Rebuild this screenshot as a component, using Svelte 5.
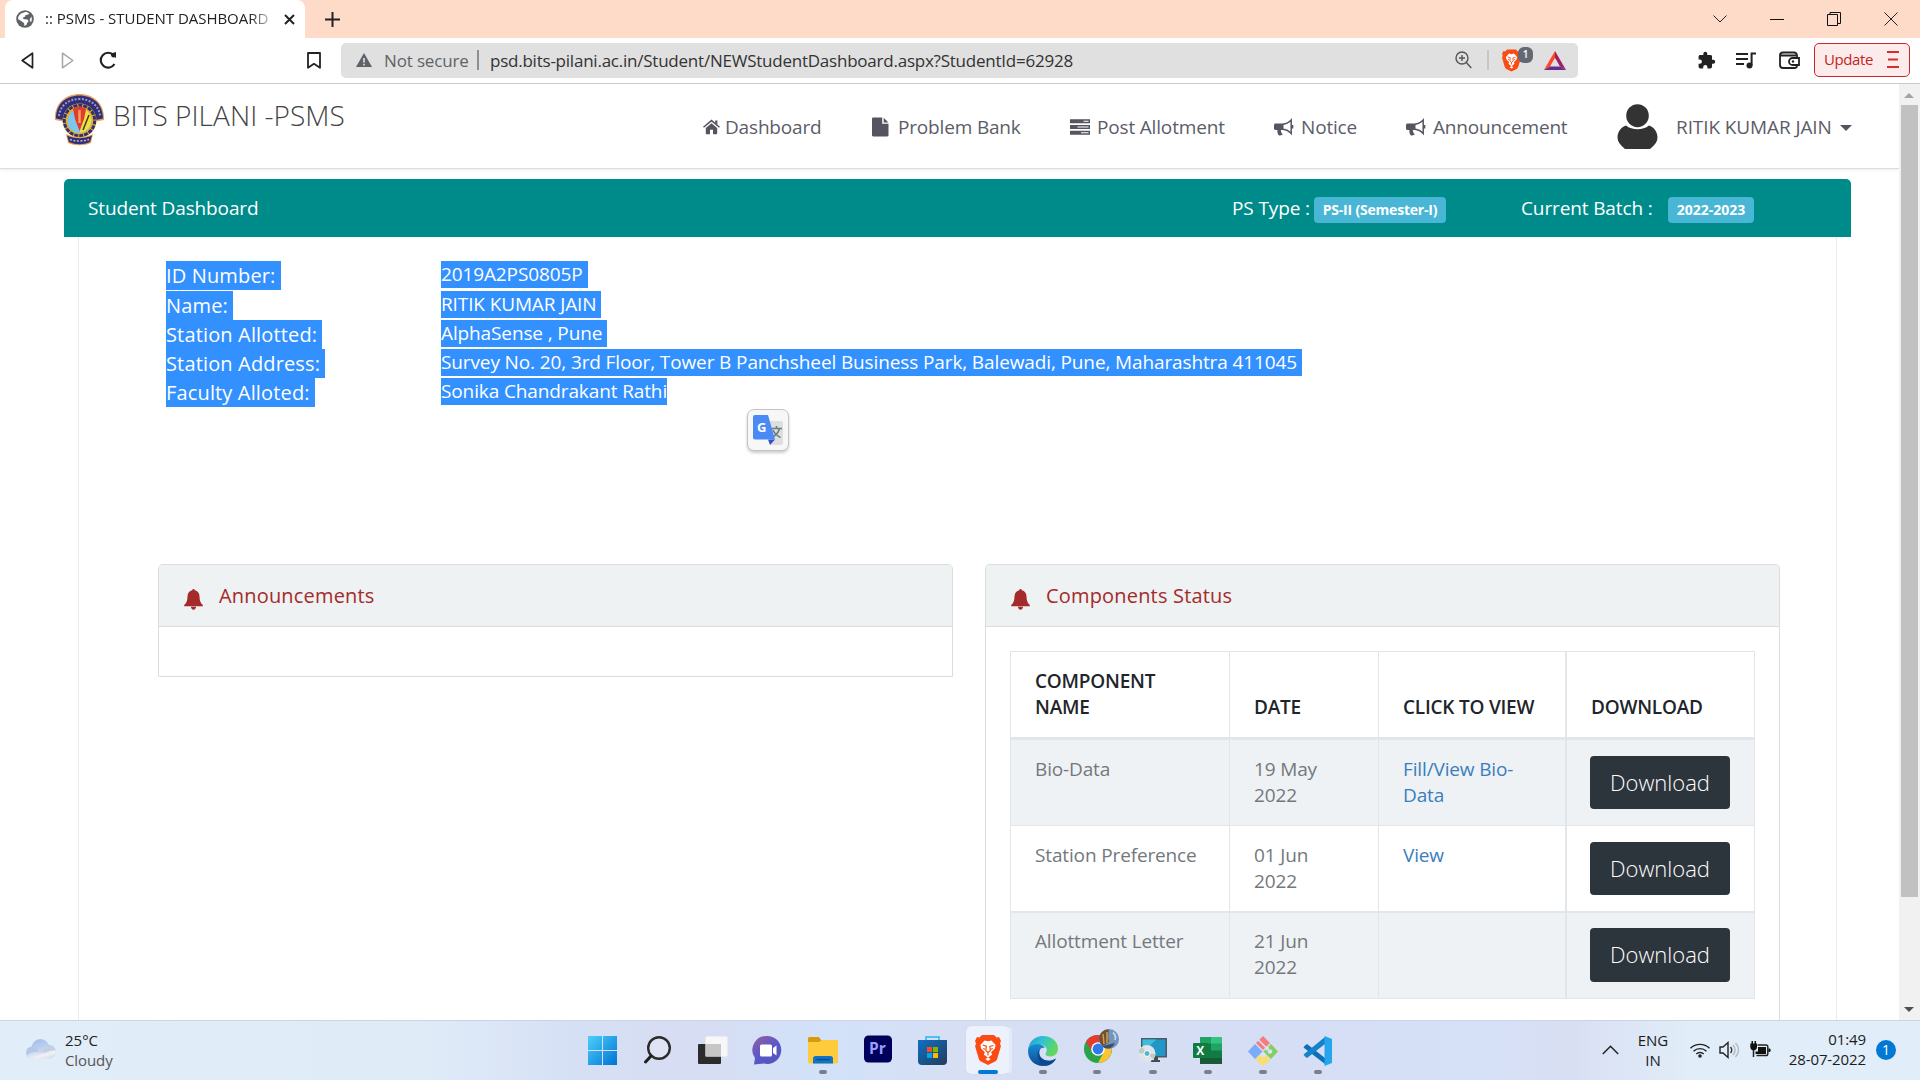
<script>
  const nav = [
    { icon: 'home', label: 'Dashboard', cls: 'n1' },
    { icon: 'file', label: 'Problem Bank', cls: 'n2' },
    { icon: 'server', label: 'Post Allotment', cls: 'n3' },
    { icon: 'horn', label: 'Notice', cls: 'n4' },
    { icon: 'horn', label: 'Announcement', cls: 'n5' }
  ];
  const details = [
    ['ID Number:', '2019A2PS0805P'],
    ['Name:', 'RITIK KUMAR JAIN'],
    ['Station Allotted:', 'AlphaSense , Pune'],
    ['Station Address:', 'Survey No. 20, 3rd Floor, Tower B Panchsheel Business Park, Balewadi, Pune, Maharashtra 411045'],
    ['Faculty Alloted:', 'Sonika Chandrakant Rathi']
  ];
  const rows = [
    { name: 'Bio-Data', date: '19 May 2022', link: 'Fill/View Bio-Data' },
    { name: 'Station Preference', date: '01 Jun 2022', link: 'View' },
    { name: 'Allottment Letter', date: '21 Jun 2022', link: '' }
  ];
  const apps = ['start', 'search', 'tasks', 'chat', 'folder', 'pr', 'store', 'brave', 'edge', 'chrome', 'pc', 'excel', 'git', 'code'];
  const running = ['folder', 'brave', 'edge', 'chrome', 'pc', 'excel', 'git', 'code'];
</script>

{#snippet bell()}
  <svg class="bell" width="19" height="21" viewBox="0 0 19 21"><path fill="#a52a2a" d="M9.5 0c.8 0 1.2.6 1.2 1.3C14 2 15.400 4.500 15.500 7.500c.1 4.200.9 6.500 3.300 8.500v1.300H.2V16c2.400-2 3.200-4.300 3.300-8.500C3.600 4.500 5 2 8.300 1.300 8.300.6 8.700 0 9.500 0zM7 17.800h5c0 1.700-1.100 2.900-2.500 2.900S7 19.500 7 17.800z"/></svg>
{/snippet}

{#snippet lion(w, h)}
  <svg width={w} height={h} viewBox="0 0 26 30">
    <path fill="#fb4a12" d="M7 0h12l2.600 2.600 2.400-.6 2 4-1 2.200.9 3-3.600 12.300c-.4 1.300-1.200 2.200-2.300 3L13 30l-7-3.500c-1.100-.8-1.900-1.700-2.300-3L.1 11.200l.9-3L0 6l2-4 2.400.6z"/>
    <path fill="#fff" d="M13 6.300l3.400-.8 4.200 4.600-.7 3.500-3.800 3.700 1.100 2.200-4.200 3.200-4.200-3.200 1.100-2.200-3.800-3.700-.7-3.500 4.200-4.600z"/>
    <path fill="none" stroke="#fb4a12" stroke-width="1.200" d="M7.800 10.200l3.500 1-.4 4.300L13 17.500l2.300-1.700-.4-4.300 3.500-1M13 17.500v3M8.300 13.500l1.800.8m7.600-.8l-1.800.8"/>
    <path fill="#fff" d="M13 22.500l2.600 1.600L13 26l-2.600-1.900z"/>
  </svg>
{/snippet}

{#snippet navIcon(name)}
  {#if name === 'home'}
    <svg width="17" height="16" viewBox="0 0 17 16"><path fill="#555461" d="M8.500 4.200l5.700 4.700v5.600c0 .5-.3.8-.8.8H10v-4.600H7v4.600H3.600c-.5 0-.8-.3-.8-.8V8.900z"/><path fill="none" stroke="#555461" stroke-width="1.500" d="M.5 8.300l8-6.700 8 6.700"/><path fill="#555461" d="M12.200 1.500h2.200v4.300l-2.200-1.800z"/></svg>
  {:else if name === 'file'}
    <svg width="17" height="20" viewBox="0 0 17 20"><path fill="#555461" d="M1.200.5h9v6.300h6.300v11.500c0 .7-.5 1.200-1.200 1.200H1.200C.6 19.500 0 19 0 18.300V1.700C0 1 .6.500 1.200.5zM11.700.7l4.700 4.700h-4.700z"/></svg>
  {:else if name === 'server'}
    <svg width="20" height="16" viewBox="0 0 20 16"><path fill="#555461" d="M0 .3h20v4H0zM0 6h20v4H0zM0 11.700h20v4H0z"/><path stroke="#fff" stroke-width="1.100" d="M13.500 2.300h5M7.500 8h11M11 13.700h7.500"/></svg>
  {:else}
    <svg width="20" height="18" viewBox="0 0 20 18"><path fill="#555461" d="M1.500 5.500h8V12H6.800c.2 1.900.6 3.200 2 4.300-.9 1.300-3.300 1.500-4.400.6C3.500 15.200 3.300 13.700 3.400 12H1.500C.7 12 0 11.300 0 10.500V7c0-.8.700-1.500 1.500-1.500z"/><path fill="none" stroke="#555461" stroke-width="1.500" d="M9 6.200c3.300-.3 6.200-2 8.200-4.200v13.500c-2-2.200-4.900-3.900-8.200-4.200"/><path stroke="#555461" stroke-width="2" d="M18.300 7v3.500"/></svg>
  {/if}
{/snippet}

<div class="screen">
  <div class="tabs">
    <div class="tab">
      <svg width="18" height="18" viewBox="0 0 18 18"><circle cx="9" cy="9" r="8.800" fill="#5f6368"/><path fill="#fff" d="M8.500 2.200c2-.5 3.600.2 4.800 1.300l-1.600 1.200-2.200.2-.3 1.700-2 .9-.1 1.500 4.200.4 1.400 1.800-1.500 1.500-.7 2-1.900 1.400-.7-3-1.900-1.500L2 8.900C2.300 5.500 4.300 3 8.500 2.200zM15.300 6.500c.8 2 .7 4-.4 6l-1.300-2.700z"/></svg>
      <span class="tabtitle">:: PSMS - STUDENT DASHBOARD</span>
      <svg class="tabx" width="11" height="11" viewBox="0 0 11 11"><path stroke="#222" stroke-width="2" d="M1 1l9 9M10 1l-9 9"/></svg>
    </div>
    <svg class="plus" width="15" height="15" viewBox="0 0 15 15"><path stroke="#222" stroke-width="2" d="M7.500 0v15M0 7.500h15"/></svg>
    <div class="wincontrols">
      <svg width="14" height="8" viewBox="0 0 14 8"><path fill="none" stroke="#222" d="M.5.5L7 7l6.500-6.500"/></svg>
      <svg width="14" height="14" viewBox="0 0 14 14"><path stroke="#111" d="M0 7.500h14"/></svg>
      <svg width="14" height="14" viewBox="0 0 14 14"><path fill="none" stroke="#111" d="M.5 2.500h10v11H.5zM3 2.500V.5h10.500v11h-3"/></svg>
      <svg width="14" height="14" viewBox="0 0 14 14"><path stroke="#222" d="M.5.5l13 13M13.500.5l-13 13"/></svg>
    </div>
  </div>

  <div class="toolbar">
    <svg class="back" width="13" height="17" viewBox="0 0 13 17"><path fill="none" stroke="#222" stroke-width="1.700" stroke-linejoin="round" d="M11.500 1.200v14.600L1.200 8.500z"/></svg>
    <svg class="fwd" width="13" height="17" viewBox="0 0 13 17"><path fill="none" stroke="#a5a5a5" stroke-width="1.500" stroke-linejoin="round" d="M1.500 1.200v14.600l10.300-7.300z"/></svg>
    <svg class="reload" width="18" height="18" viewBox="0 0 18 18"><path fill="none" stroke="#222" stroke-width="2.100" d="M15.500 13A7.400 7.400 0 1 1 14.700 4.300"/><path fill="#222" d="M11 2.800L17 1v6z"/><circle cx="14.500" cy="4.300" r="2.300" fill="#222"/></svg>
    <svg class="bookmark" width="14" height="17" viewBox="0 0 14 17"><path fill="none" stroke="#222" stroke-width="1.800" stroke-linejoin="round" d="M1 1h12v14.800l-6-4-6 4z"/></svg>
    <div class="address">
      <svg width="16" height="14" viewBox="0 0 16 14"><path fill="#5f6368" d="M8 0l8 14H0z"/><path stroke="#e0e0e0" stroke-width="1.600" d="M8 5v4.500M8 10.700v1.700"/></svg>
      <span class="unsafe">Not secure</span>
      <i class="vline dark"></i>
      <span class="url">psd.bits-pilani.ac.in/Student/NEWStudentDashboard.aspx?StudentId=62928</span>
      <svg class="lens" width="17" height="18" viewBox="0 0 17 18"><g fill="none" stroke="#555" stroke-width="1.400"><circle cx="7" cy="7" r="6"/><path d="M11.300 11.500l5 5.500M4 7h6M7 4v6"/></g></svg>
      <i class="vline light"></i>
      <div class="shield">
        {@render lion(19, 23)}
        <span class="count">1</span>
      </div>
      <svg class="bat" width="22" height="19" viewBox="0 0 22 19"><path fill="#ff4724" d="M11 0L0 19l6-3.500 5-8.700z"/><path fill="#9e1f63" d="M11 0l11 19-6-3.500-5-8.700z"/><path fill="#662d91" d="M0 19h22l-6-3.500H6z"/></svg>
    </div>
    <svg class="puzzle" width="19" height="19" viewBox="0 0 24 24"><path fill="#222" d="M20.500 11H19V7c0-1.100-.9-2-2-2h-4V3.500a2.500 2.500 0 0 0-5 0V5H4c-1.100 0-2 .9-2 2v3.800h1.500a2.700 2.700 0 0 1 0 5.400H2V20c0 1.100.9 2 2 2h3.800v-1.500a2.700 2.700 0 0 1 5.400 0V22H17c1.100 0 2-.9 2-2v-4h1.500a2.500 2.500 0 0 0 0-5z"/></svg>
    <svg class="music" width="21" height="17" viewBox="0 0 21 17"><path stroke="#222" stroke-width="2.100" d="M0 2h12M0 7h12M0 12h8"/><circle cx="13.500" cy="13.500" r="3" fill="#222"/><path fill="none" stroke="#222" stroke-width="2" d="M15.600 13.500V1.500H20"/></svg>
    <svg class="wallet" width="21" height="18" viewBox="0 0 21 18"><g fill="none" stroke="#222" stroke-width="1.800"><path d="M18 6V4.500C18 3 17 1.500 15 1.500H4C2 1.500 1 2.600 1 4v10c0 2 1 3 3 3h11.500c1.700 0 2.500-1 2.500-2.500M1.500 4.500H17"/><path d="M20 7h-6.500a3.400 3.400 0 0 0 0 7H20z"/></g><circle cx="14" cy="10.500" r="1.200" fill="#222"/></svg>
    <div class="update"><span>Update</span><svg width="12" height="17" viewBox="0 0 12 17"><path stroke="#d92d2d" stroke-width="1.800" d="M0 1h12M1 8.500h10M0 16h12"/></svg></div>
  </div>

  <div class="view">
    <div class="page">
      <header>
        <svg class="crest" width="49" height="51" viewBox="0 0 49 51">
          <path fill="#e9a25b" d="M0 26C-1 10 10 0 24.500 0S50 10 49 26l-8 1.500L24.500 14 8 27.500z"/>
          <path fill="#312f78" d="M1 24.500C1 10 11 1.500 24.500 1.500S48 10 48 24.500L41 26 24.500 13 8 26z"/>
          <path fill="none" stroke="#9c98c9" stroke-width="2" stroke-dasharray="2 1.500" d="M4 22C5 12 13 5 24.500 5S44 12 45 22"/>
          <circle cx="24.500" cy="26.500" r="17" fill="#e6b129"/>
          <circle cx="24.500" cy="26.500" r="15.200" fill="none" stroke="#312f78" stroke-width="3" stroke-dasharray="4 1"/>
          <circle cx="24.500" cy="26.500" r="13" fill="#e6b129"/>
          <circle cx="24.500" cy="27" r="12" fill="#7ec6ea"/>
          <path fill="#f2df3a" d="M25 37l6-21c6 4 7 13 2.500 18-2.500 3-5 4.500-8.500 4.500z"/>
          <path stroke="#3f3c33" stroke-width="1.500" d="M28 36l6-15"/>
          <path fill="#e23b32" d="M18 15c4-3 9-3 13 0l-2 10-4.500 12L20 25z"/>
          <path stroke="#f3a552" stroke-width="2.500" d="M24.500 16v13"/>
          <path fill="#e9a25b" d="M11 40c8 4 19 4 27 0l-2 9c-7 3-16 3-23 0z"/>
          <path fill="#312f78" d="M12 41.500c8 3.500 17 3.500 25 0l-2 6.500c-7 3-14 3-21 0z"/>
          <path fill="none" stroke="#c5b3b5" stroke-width="1.500" stroke-dasharray="2 1.500" d="M15 45.500c6 2 13 2 19 0"/>
        </svg>
        <h1>BITS PILANI -PSMS</h1>
        <nav>
          {#each nav as n}
            <a class={n.cls}>{@render navIcon(n.icon)}<span>{n.label}</span></a>
          {/each}
        </nav>
        <svg class="avatar" width="41" height="46" viewBox="0 0 41 46"><ellipse cx="20.500" cy="11.700" rx="11.300" ry="11.500" fill="#333"/><path fill="#333" d="M9 21.500c6 5 17 5 23 0 5 1.500 8.500 6.500 8.500 12 0 4-2.500 7.500-7.500 11.500H8C3 41 .5 37.500.5 33.500c0-5.500 3.500-10.500 8.500-12z"/></svg>
        <span class="user">RITIK KUMAR JAIN</span>
        <i class="caret"></i>
      </header>

      <main>
        <div class="band">
          <span class="bandtitle">Student Dashboard</span>
          <span class="pstype">PS Type :</span><b class="badge b1"><span>PS-II (Semester-I)</span></b>
          <span class="batch">Current Batch :</span><b class="badge b2"><span>2022-2023</span></b>
        </div>
        <section class="panel">
          <div class="details">
            {#each details as [k, v], i}
              <div class="row">
                <span class="key k{i}"><mark>{k}</mark></span>
                <span class="val v{i}"><mark>{v}</mark></span>
              </div>
            {/each}
            <div class="translate">
              <svg width="30" height="30" viewBox="0 0 30 30">
                <path fill="#dedede" d="M13 6h15a2 2 0 0 1 2 2v20a2 2 0 0 1-2 2H18z"/>
                <path fill="none" stroke="#667f84" stroke-width="1.600" d="M18 13.500h11M23.500 11v2.500M26.500 13.500c-1 4-4 7-7.500 9M20 15c1.500 3.500 4.500 6 7.500 7.500"/>
                <path fill="#3a50b8" d="M15 24.500h7L17 30z"/>
                <path fill="#4a8af4" d="M2 0h13l7 24.500H2a2 2 0 0 1-2-2V2a2 2 0 0 1 2-2z"/>
                <text x="4" y="17" font-family="Open Sans, sans-serif" font-size="13" font-weight="700" fill="#fff">G</text>
              </svg>
            </div>
          </div>
          <div class="cards">
            <article class="card">
              <h2>{@render bell()}<span class="t1">Announcements</span></h2>
              <div class="blank"></div>
            </article>
            <article class="card right">
              <h2>{@render bell()}<span class="t2">Components Status</span></h2>
              <div class="tablewrap">
                <div class="grid head">
                  <div>COMPONENT<br />NAME</div><div>DATE</div><div>CLICK TO VIEW</div><div>DOWNLOAD</div>
                </div>
                {#each rows as r, i}
                  <div class="grid body r{i}">
                    <div>{r.name}</div><div>{r.date}</div><div><a class="lnk">{r.link}</a></div><div class="act"><button><span>Download</span></button></div>
                  </div>
                {/each}
              </div>
            </article>
          </div>
        </section>
      </main>
    </div>
    <div class="scroll">
      <i class="up"></i>
      <div class="thumb"></div>
      <i class="down"></i>
    </div>
  </div>

  <footer>
    <div class="weather">
      <svg width="30" height="20" viewBox="0 0 30 20"><defs><linearGradient id="cl" x1="0" y1="0" x2=".3" y2="1"><stop offset="0" stop-color="#9fbcec"/><stop offset="1" stop-color="#d3def0"/></linearGradient><linearGradient id="cf" x1="0" y1="0" x2="1" y2="1"><stop offset="0" stop-color="#b5c8e8"/><stop offset=".6" stop-color="#eef1f6"/><stop offset="1" stop-color="#ccd4e0"/></linearGradient></defs><circle cx="14.500" cy="9" r="9" fill="url(#cl)"/><circle cx="6" cy="13.500" r="6" fill="#b3c8e8"/><circle cx="23.500" cy="12.500" r="6.500" fill="#c3cfe4"/><path fill="url(#cf)" d="M1 16.500c4-5 9-3.500 13-2.500 5 1.200 10-4 15.800-2.500.8 4-1.800 8-6.300 8H6C3.500 19.500 1.700 18.500 1 16.500z"/></svg>
      <div class="wtext"><span class="deg">25°C</span><span class="cloudy">Cloudy</span></div>
    </div>
    <div class="apps">
      {#each apps as a}
        <div class="app {a}">
          {#if a === 'start'}
            <svg width="30" height="30" viewBox="0 0 30 30"><defs><linearGradient id="w" x1="0" y1="0" x2="1" y2="1" gradientUnits="objectBoundingBox"><stop offset="0" stop-color="#4cd0fb"/><stop offset="1" stop-color="#0072d3"/></linearGradient></defs><path fill="url(#w)" d="M0 0h14v14H0zM15 0h14v14H15zM0 15h14v14H0zM15 15h14v14H15z"/></svg>
          {:else if a === 'search'}
            <svg width="30" height="30" viewBox="0 0 30 30"><circle cx="16" cy="12" r="10.800" fill="#e6e9f7" fill-opacity=".5" stroke="#2b2b2b" stroke-width="2.400"/><path stroke="#1e1e1e" stroke-width="3" stroke-linecap="round" d="M8 20l-5.500 6"/></svg>
          {:else if a === 'tasks'}
            <svg width="30" height="30" viewBox="0 0 30 30"><rect y="8" width="23" height="20" rx="1" fill="#2c2c2c"/><rect x="7.500" y=".5" width="22" height="20" rx="1" fill="#f7f7f8"/><path fill="#c6c6c6" d="M7.500 8H23v12.500H7.500z"/></svg>
          {:else if a === 'chat'}
            <svg width="30" height="30" viewBox="0 0 30 30"><defs><linearGradient id="ch" x1="0" y1="0" x2=".6" y2="1"><stop offset="0" stop-color="#95619f"/><stop offset=".6" stop-color="#5b57c9"/><stop offset="1" stop-color="#5257bd"/></linearGradient></defs><path fill="url(#ch)" d="M15 0a14 14 0 1 1-4 27.600L1 28.500l1-6.500A14 14 0 0 1 15 0z"/><rect x="7" y="8.500" width="12" height="12" rx="1.500" fill="#fff"/><path fill="#fff" d="M20 12l3.500-2.500v10L20 17z"/></svg>
          {:else if a === 'folder'}
            <svg width="30" height="30" viewBox="0 0 30 30"><path fill="#d99a08" d="M0 2.500C0 1.500.7 1 1.500 1H10c1 0 1.500.7 2 1.500L13 4h16a1 1 0 0 1 1 1v8H0z"/><path fill="#fdcb3c" d="M0 6h11l3-2h16v22a1.500 1.500 0 0 1-1.500 1.500h-27A1.500 1.500 0 0 1 0 26z"/><path fill="#1173c6" d="M5 27.500v-5c0-1.500 1-2.500 2.500-2.500h15c1.500 0 2.500 1 2.500 2.500v5z"/><path stroke="#0b4a8b" stroke-width="1.300" d="M8.500 23.500h13"/></svg>
          {:else if a === 'pr'}
            <svg width="30" height="30" viewBox="0 0 30 30"><rect x="1" y="-.5" width="28" height="27" rx="4.500" fill="#00005b"/><text x="6" y="17.500" font-family="Open Sans, sans-serif" font-weight="700" font-size="15.500" fill="#9b9bff">Pr</text></svg>
          {:else if a === 'store'}
            <svg width="30" height="30" viewBox="0 0 30 30"><defs><linearGradient id="st" x1="0" y1="0" x2="1" y2="1"><stop offset="0" stop-color="#1070c4"/><stop offset="1" stop-color="#243a5c"/></linearGradient></defs><path fill="none" stroke="#20b8f2" stroke-width="1.500" d="M8 5.500V1h13v4.500"/><path fill="url(#st)" d="M0 4h29v21a4 4 0 0 1-4 4H4a4 4 0 0 1-4-4z"/><path fill="#f25022" d="M9 11h5v5H9z"/><path fill="#7fba00" d="M15 11h5v5h-5z"/><path fill="#00a4ef" d="M9 17h5v5H9z"/><path fill="#ffb900" d="M15 17h5v5h-5z"/></svg>
          {:else if a === 'brave'}
            {@render lion(26, 30)}
          {:else if a === 'edge'}
            <svg width="30" height="30" viewBox="0 0 30 30"><defs><linearGradient id="e1" x1="0" y1="0" x2="1" y2=".4"><stop offset="0" stop-color="#239ad8"/><stop offset=".5" stop-color="#2fc4d0"/><stop offset="1" stop-color="#62d85c"/></linearGradient><linearGradient id="e2" x1="0" y1="0" x2="0" y2="1"><stop offset="0" stop-color="#1a8cd8"/><stop offset="1" stop-color="#0c4a92"/></linearGradient></defs><path fill="url(#e1)" d="M0 14C.8 5.500 7 0 15 0c9 0 15 6 15 12.500 0 5-3.500 8-7.500 8-3 0-5-1-5-2.500 0-1 1.300-1.600 1.300-4 0-3-3-5.500-7-5.500C6.500 8.500 2 10.500 0 14z"/><path fill="url(#e2)" d="M0 15c0-4 4.500-7 9.500-7 4 0 6.500 2 7.500 4-6-1.500-7 5-4.500 9 3 4 9.500 5.500 15.500 1.500C25.500 27 21 30 15 30 6.500 30 0 23.500 0 15z"/><path fill="#0b4a91" d="M12 13c-5 5-2 14 5.500 16.800C22 29.500 26 27 28 22.500c-6 4-12.500 2.500-15.500-1.500-1.600-2.600-1.800-5.600-.5-8z"/></svg>
          {:else if a === 'chrome'}
            <svg width="36" height="36" viewBox="0 0 36 36"><circle cx="14" cy="20" r="14" fill="#2ba24c"/><path fill="#e33b2e" d="M2 12.500A14 14 0 0 1 26.500 14H14a6.500 6.500 0 0 0-5.500 9.500z"/><path fill="#fdc52d" d="M14 34a14 14 0 0 0 12.500-20H14a6.500 6.500 0 0 1 5.600 9.500z"/><circle cx="14" cy="20" r="6.800" fill="#fff"/><circle cx="14" cy="20" r="5.400" fill="#2f79ea"/><circle cx="25" cy="10" r="10" fill="#7394bd"/><path fill="#6b5234" d="M18 3c2-2 5-3 7-2-1 4-1 8 0 12l-6 4c-5-4-5-10-1-14z"/><path stroke="#d99a45" stroke-width="1.500" d="M19 5l1 10M23 3v11"/><path fill="#3c4f6e" d="M18 17l13-3c-2 4-5 6-8 5.500-2 0-4-1-5-2.500z"/><path fill="none" stroke="#c3d5e6" stroke-width="1.800" d="M29 3.500c2 2 3 5 2 7.500"/></svg>
          {:else if a === 'pc'}
            <svg width="30" height="30" viewBox="0 0 30 30"><rect x="3" y="2" width="26" height="19.500" fill="#4d5963"/><path fill="#2396c8" d="M4.500 3.500h23V20h-23z"/><path fill="#3dbcdd" d="M4.500 3.500h14L4.500 16z"/><path fill="#444d55" d="M13 24h9v2h-9zM16 21h4v4h-4z"/><circle cx="9" cy="17.500" r="8.500" fill="#dfe4e8"/><path fill="#b9cdc0" d="M9 17.500L4 11a8.500 8.500 0 0 0-3.500 6zM9 17.500L15 23a8.500 8.500 0 0 0 2.500-5z"/><circle cx="9" cy="17.500" r="3" fill="#5caed2" stroke="#fff"/></svg>
          {:else if a === 'excel'}
            <svg width="30" height="30" viewBox="0 0 30 30"><path fill="#21a366" d="M7 1h22v27H7z"/><path fill="#33c481" d="M18 1h11v6.500H18z"/><path fill="#107c41" d="M7 7.500h11v14H7zM18 14.500h11v7H18z"/><path fill="#185c37" d="M7 21.500h22V28H7z"/><rect y="7" width="15" height="15" rx="1" fill="#107c41"/><text x="3.200" y="19" font-family="Open Sans, sans-serif" font-size="12" font-weight="700" fill="#fff">X</text></svg>
          {:else if a === 'git'}
            <svg width="30" height="30" viewBox="0 0 30 30"><path fill="#f57d80" d="M15 0l7 7-7 7-7-7z"/><path fill="#7cabf8" d="M7 8l7.500 7.500L7 23l-7-7.500z"/><path fill="#84cf63" d="M23 8l7 7.500-7 7.500-7.500-7.500z"/><path fill="#fbdd70" d="M15 16.500l7.500 7L15 30l-7.500-6.500z"/><path stroke="#dde3f5" stroke-width="1.500" fill="none" d="M10 3.500l9 9"/><circle cx="19" cy="12.500" r="2" fill="#dde3f5"/><circle cx="15" cy="19" r="2.300" fill="#dde3f5"/><circle cx="22" cy="15.500" r="2.300" fill="#dde3f5"/></svg>
          {:else}
            <svg width="30" height="30" viewBox="0 0 30 30"><path fill="#0d70b5" d="M2 9.500L4 8l18 14v6L.5 11.500z"/><path fill="#1583c9" d="M2 20.500L4 22 22 8V1L.5 18.500z"/><path fill="#26a5ee" d="M21.500 0L29 3v24l-7.500 3z"/></svg>
          {/if}
          {#if running.includes(a)}<i class="dot"></i>{/if}
        </div>
      {/each}
    </div>
    <div class="tray">
      <svg class="chev" width="17" height="10" viewBox="0 0 17 10"><path fill="none" stroke="#222" stroke-width="1.500" d="M.8 9L8.500 1.300 16.200 9"/></svg>
      <div class="lang"><span>ENG</span><span>IN</span></div>
      <svg class="wifi" width="20" height="16" viewBox="0 0 20 16"><g fill="none" stroke="#222" stroke-width="1.400"><path d="M.5 6.300a13.400 13.400 0 0 1 19 0M3.500 9.300a9.200 9.200 0 0 1 13 0M6.300 12a5.300 5.300 0 0 1 7.400 0"/></g><circle cx="10" cy="14" r="1.800" fill="#222"/></svg>
      <svg class="vol" width="21" height="18" viewBox="0 0 21 18"><g fill="none" stroke-width="1.400"><path stroke="#222" d="M1 6h3l5-4.500v15L4 12H1z"/><path stroke="#333" d="M11.500 6c1.400 1.700 1.400 4.300 0 6"/><path stroke="#b3bac2" d="M14 4c2.500 3 2.500 7 0 10M16.500 2c4 4 4 10 0 14"/></g></svg>
      <svg class="batt" width="21" height="17" viewBox="0 0 21 17"><path fill="none" stroke="#222" stroke-width="1.500" d="M7.500 4H16c1 0 1.800.8 1.800 1.800v7c0 1-.8 1.800-1.800 1.800H6.500M3.500 9v7"/><path fill="#111" d="M8 6h8v7H5.500V10.500H8zM1.500 0H3v2.500h1.500V0H6v2.500h1V6c0 2-1.200 3.200-2.700 3.200H3C1.500 9.200.3 8 .3 6V2.500h1.200zM18.500 7.500H20l.8 1.800-.8 1.800h-1.500z"/></svg>
      <div class="clock"><span class="hm">01:49</span><span class="dmy">28-07-2022</span></div>
      <b class="note">1</b>
    </div>
  </footer>
</div>

<style>
  :global(body) { background: #fff; overflow: hidden; }
  * { box-sizing: border-box; }
  svg { display: block; flex: none; overflow: visible; }
  .screen { width: 1920px; height: 1080px; display: flex; flex-direction: column; font-family: 'Open Sans', sans-serif; overflow: hidden; white-space: nowrap; }

  .tabs { height: 38px; flex: none; background: #fddbc8; display: flex; align-items: center; padding-left: 5px; }
  .tab { width: 300px; height: 38px; background: #fff; border-radius: 8px 8px 0 0; display: flex; align-items: center; padding-left: 11px; }
  .tabtitle { width: 225px; margin: -2px 0 0 11px; font-size: 15px; letter-spacing: -0.03px; color: #222; mask-image: linear-gradient(90deg, #000 205px, transparent 232px); }
  .tabx { margin-left: 14px; }
  .plus { margin-left: 20px; }
  .wincontrols { margin-left: auto; margin-right: 22px; display: flex; align-items: center; gap: 43px; }

  .toolbar { height: 46px; flex: none; border-bottom: 1px solid #c9c9c9; display: flex; align-items: center; background: #fff; padding-bottom: 1px; }
  .back { margin-left: 21px; }
  .fwd { margin-left: 27px; }
  .reload { margin-left: 25px; }
  .bookmark { margin-left: 190px; }
  .address { width: 1237px; height: 35px; margin-left: 20px; margin-top: 1px; border-radius: 5px; background: #e0e0e0; display: flex; align-items: center; padding-left: 15px; padding-bottom: 1px; font-size: 17px; }
  .unsafe { width: 93px; margin-left: 12px; color: #5f6368; letter-spacing: -0.15px; }
  .vline { width: 2px; height: 20px; }
  .dark { background: #8f8f8f; }
  .light { background: #c6c6c6; margin-left: 15px; }
  .url { width: 965px; margin-left: 11px; color: #333; letter-spacing: -0.23px; }
  .shield { margin-left: 13px; display: flex; position: relative; }
  .count { position: absolute; left: 16px; top: -2px; width: 15px; height: 16px; border-radius: 6px; background: #636873; color: #fff; font-size: 10px; font-weight: 600; line-height: 15px; text-align: center; }
  .bat { margin-left: 23px; }
  .puzzle { margin-left: 119px; }
  .music { margin-left: 20px; }
  .wallet { margin-left: 22px; }
  .update { width: 96px; height: 34px; margin-left: 14px; border: 1.500px solid #c9262b; border-radius: 5px; background: #fbeceb; color: #c5221f; font-size: 15px; letter-spacing: -0.4px; display: flex; align-items: center; padding: 0 10px 2px 9px; justify-content: space-between; }

  .view { height: 936px; flex: none; display: flex; overflow: hidden; }
  .page { width: 1899px; height: 936px; overflow: hidden; }
  header { height: 85px; border-bottom: 1px solid #dcdcdc; box-shadow: 0 1px 3px rgba(0, 0, 0, .08); display: flex; align-items: center; color: #5d5c69; font-size: 19px; padding-bottom: 4px; }
  .crest { margin-left: 55px; margin-top: -9px; }
  h1 { width: 590px; margin: -19px 0 0 9px; font-size: 28px; font-weight: 300; letter-spacing: 0.05px; color: #444; }
  nav { width: 914px; display: grid; grid-template-columns: 169px 198px 204px 132px 211px; margin-top: 6px; letter-spacing: -0.17px; }
  nav a { display: flex; align-items: center; }
  nav span { margin-left: 7px; }
  .n1 span { margin-left: 5px; }
  .n2 span { margin-left: 9px; }
  .avatar { margin-top: 5px; }
  .user { width: 164px; margin-left: 18px; margin-top: 6px; font-size: 19px; letter-spacing: -0.1px; }
  .caret { border: 6px solid transparent; border-top: 6px solid #555461; border-bottom: 0; margin-top: 7px; }

  main { padding: 9px 48px 0 64px; }
  .band { height: 58px; margin-top: 1px; border-radius: 5px 5px 0 0; background: #008b8b; color: #fff; display: flex; align-items: center; font-size: 19px; letter-spacing: -0.12px; padding-left: 24px; padding-bottom: 1px; }
  .bandtitle { width: 1144px; }
  .pstype { width: 82px; }
  .batch { width: 147px; margin-left: 75px; }
  .badge { height: 26px; margin-top: 4px; border-radius: 4px; background: #49b6d6; font-size: 14px; line-height: 26px; text-align: center; }
  .b1 { width: 132px; letter-spacing: -0.2px; }
  .b2 { width: 86px; letter-spacing: 0; }
  .panel { height: 800px; margin: 0 15px 0 14px; border: 1px solid #ebebeb; border-top: 0; padding: 24px 0 0 79px; width: 1759px; }
  .details { height: 303px; padding-left: 8px; position: relative; }
  .row { display: grid; grid-template-columns: 275px 1fr; height: 29px; color: #fff; }
  .row:first-child { height: 30px; }
  mark { display: inline-block; background: #3390ff; color: #fff; padding-right: 5px; vertical-align: top; }
  .key mark { font-size: 20px; line-height: 29px; height: 29px; letter-spacing: 0.15px; }
  .val mark { font-size: 19px; line-height: 27px; height: 27px; letter-spacing: -0.12px; }
  .v4 mark { padding-right: 0; }
  .translate { position: absolute; left: 589px; top: 148px; width: 42px; height: 42px; border: 1px solid #c4c4c4; border-radius: 7px; background: #f7f7f7; box-shadow: 0 2px 3px rgba(0, 0, 0, .2); padding: 5px; }

  .cards { display: grid; grid-template-columns: 795px 795px; gap: 32px; }
  .card { border: 1px solid #dcdcdc; border-radius: 5px 5px 0 0; }
  .card:first-child { height: 113px; }
  .right { height: 600px; border-bottom: 0; }
  h2 { height: 62px; margin: 0; border-bottom: 1px solid #dcdcdc; border-radius: 4px 4px 0 0; background: #eef2f3; color: #a52a2a; font-size: 20px; font-weight: 400; letter-spacing: 0.18px; display: flex; align-items: center; padding-left: 25px; }
  .bell { margin-top: 7px; }
  h2 span { margin-left: 16px; }
  .tablewrap { width: 745px; margin: 24px 0 0 24px; border: 1px solid #e1e6ea; color: #74787c; font-size: 19px; line-height: 26px; letter-spacing: -0.14px; white-space: normal; }
  .grid { display: grid; grid-template-columns: 219px 149px 188px 187px; }
  .grid > div { padding: 16px 24px 0; border-right: 1px solid #e1e6ea; }
  .grid > div:nth-child(3) { border-right-width: 2px; }
  .grid > div:last-child { border-right: 0; }
  .head { height: 88px; border-bottom: 3px solid #e1e6ea; color: #212529; font-weight: 600; letter-spacing: -0.22px; align-items: stretch; }
  .head > div { display: flex; align-items: flex-end; padding-bottom: 17px; padding-top: 0; }
  .head > div:first-child { display: block; padding-top: 16px; }
  .body { height: 86px; }
  .r0 { border-bottom: 1px solid #e1e6ea; }
  .r1 { border-bottom: 2px solid #e1e6ea; height: 87px; }
  .r2 { height: 85px; }
  .r2 > div { padding-top: 15px; }
  .r0, .r2 { background: #eef2f5; }
  .lnk { color: #3b7dbd; }
  .grid > .act { padding: 16px 0 0 23px; }
  .r2 > .act { padding-top: 15px; }
  button { width: 140px; height: 53px; border: 0; border-radius: 4px; padding: 0 0 2px; background: #2d353c; color: #fff; font-family: 'Open Sans', sans-serif; font-size: 22px; font-weight: 300; display: block; }
  .r2 button { height: 54px; }

  .scroll { width: 21px; background: #f1f1f1; display: flex; flex-direction: column; align-items: center; padding-right: 1px; }
  .up { border: 5px solid transparent; border-bottom: 5px solid #a3a3a3; border-top: 0; margin-top: 9px; }
  .thumb { width: 17px; height: 792px; margin-top: 7px; background: #c1c1c1; }
  .down { border: 5px solid transparent; border-top: 5px solid #505050; border-bottom: 0; margin-top: 110px; }

  footer { height: 60px; flex: none; border-top: 1px solid #c9d5e6; display: flex; background: linear-gradient(90deg, #e1edf8 0, #e0ebf8 22%, #d6e0f5 30%, #d7ddf2 36%, #d2e2f9 43%, #d7dff4 50%, #d5def4 66%, #d6e0f6 78%, #d9dff3 82%, #e1edf8 88%); }
  .weather { width: 575px; display: flex; padding: 18px 0 0 26px; }
  .wtext { display: flex; flex-direction: column; margin: -9px 0 0 9px; font-size: 15px; line-height: 20px; color: #222; }
  .cloudy { color: #555; letter-spacing: -0.1px; }
  .apps { display: grid; grid-template-columns: repeat(14, 55.040px); width: 772px; }
  .app { display: flex; flex-direction: column; align-items: center; padding-top: 15px; position: relative; }
  .brave { width: 43px; margin-left: 6px; height: 48px; margin-top: 5px; padding-top: 9px; border-radius: 5px; background: #edf1fb; box-shadow: 4px 0 0 -1px #e5eaf8, 0 0 1px #b6bed3; }
  .chrome { padding-top: 8px; padding-left: 8px; }
  .dot { position: absolute; top: 49px; width: 8px; height: 4px; border-radius: 2px; background: #7b7f89; }
  .chrome .dot { left: 23px; }
  .brave .dot { top: 44px; width: 20px; background: #0078d4; }
  .tray { margin-left: 255px; display: flex; font-size: 15px; line-height: 20px; color: #1c1c1c; }
  .chev { margin-top: 24px; }
  .lang { width: 44px; margin-left: 12px; padding-top: 9px; text-align: center; display: flex; flex-direction: column; }
  .wifi { margin: 21px 0 0 15px; }
  .vol { margin: 20px 0 0 9px; }
  .batt { margin: 20px 0 0 10px; }
  .clock { width: 86px; margin-left: 9px; padding-top: 8px; text-align: right; display: flex; flex-direction: column; letter-spacing: -0.1px; }
  .note { width: 20px; height: 20px; margin: 19px 0 0 10px; border-radius: 50%; background: #0078d4; color: #fff; font-size: 14px; font-weight: 400; text-align: center; }
</style>
